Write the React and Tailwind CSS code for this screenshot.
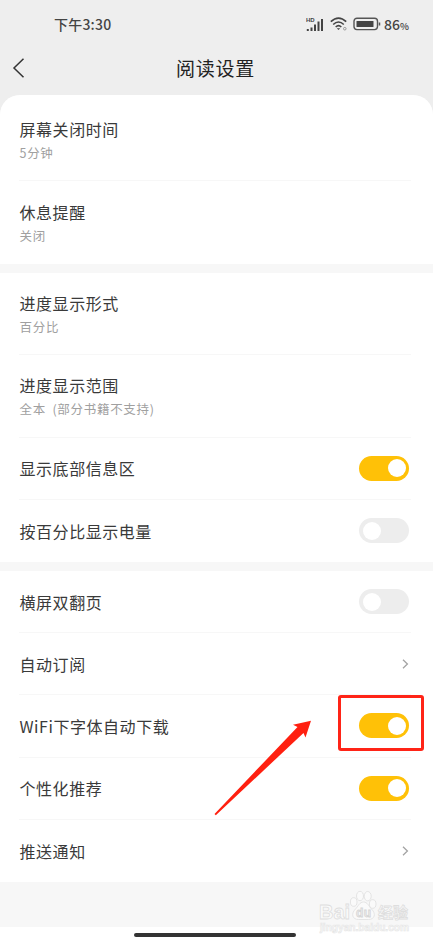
const sections = [
    [
        { title: "屏幕关闭时间", sub: "5分钟" },
        { title: "休息提醒", sub: "关闭" },
    ],
    [
        { title: "进度显示形式", sub: "百分比" },
        { title: "进度显示范围", sub: "全本 (部分书籍不支持)" },
        { title: "显示底部信息区", toggle: true, on: true },
        { title: "按百分比显示电量", toggle: true, on: false },
    ],
    [
        { title: "横屏双翻页", toggle: true, on: false },
        { title: "自动订阅", link: true },
        { title: "WiFi下字体自动下载", toggle: true, on: true, marked: true },
        { title: "个性化推荐", toggle: true, on: true },
        { title: "推送通知", link: true },
    ],
];

function Toggle({ on }) {
    return (
        <span className={`mr-[2px] flex h-[25px] w-[50px] items-center rounded-full px-[3.5px] ${on ? "justify-end bg-[#ffc107]" : "justify-start bg-[#ededed]"}`}>
            <span className="h-[18px] w-[18px] rounded-full bg-white" />
        </span>
    );
}

function Row({ item, last }) {
    return (
        <div className={`relative mr-[22px] ml-[19px] flex items-center justify-between ${item.sub ? "h-[82.4px] pt-[1px]" : "h-[62.2px]"} ${last ? "" : "border-b border-[#f7f7f7]"}`}>
            <div className="pl-[0.5px]">
                <div className="text-[16px] leading-[24px] tracking-[0.55px] text-[#3a3a3a]">{item.title}</div>
                {item.sub && <div className="mt-[2px] text-[12.5px] leading-[20px] tracking-[0.7px] whitespace-pre text-[#a0a0a0] [word-spacing:3px]">{item.sub}</div>}
            </div>
            {item.toggle && <Toggle on={item.on} />}
            {item.link && (
                <svg className="mr-[2px] h-[10px] w-[7px]" viewBox="0 0 7 10" fill="none" stroke="#a3a3a3" strokeWidth="1.3">
                    <path d="M1 .8 5.4 5 1 9.2" />
                </svg>
            )}
            {item.marked && <Marker />}
        </div>
    );
}

function Marker() {
    return (
        <>
            <div className="absolute top-0 -right-[13px] h-[56px] w-[86px] rounded-[3px] border-3 border-[#ff2417]" />
            <svg className="absolute top-[25px] left-[195px] h-[96px] w-[98px]" viewBox="0 0 98 96" fill="#ff2010">
                <path d="M97 .8 79 4.800l4.500 2.200L.5 94l1.300 1.300L89.500 13l2 4.500Z" />
            </svg>
        </>
    );
}

function StatusBar() {
    return (
        <div className="flex h-[45px] items-center justify-between pt-[3px] pr-[24px] pl-[54px] text-[#444]">
            <span className="text-[14px] font-medium tracking-[0.2px]">下午3:30</span>
            <div className="flex items-center">
                <svg className="h-[16px] w-[18px]" viewBox="0 -2 18 16" fill="#444">
                    <text x="0" y="4" fontSize="6" fontWeight="700" fontFamily="Liberation Sans">HD</text>
                    <path d="M.8 11h2v2h-2zM4.500 9.500h2V13h-2zM8 6.500h2V13H8zM11.500 3.500h2V13h-2zM15 1h2v12h-2z" />
                </svg>
                <svg className="ml-[6px] h-[14px] w-[18px]" viewBox="0 0 18 14" fill="none" stroke="#444" strokeWidth="1.600">
                    <path d="M.8 4.700q7.700-7.200 15.400 0M3.200 7.500q5.300-5 10.600 0M5.700 10q2.800-2.600 5.600 0" />
                    <path d="M6.800 11.200h3.400L8.500 13Z" fill="#444" stroke="none" />
                    <circle cx="14.800" cy="11.700" r="1.300" stroke="#888" strokeWidth=".8" />
                </svg>
                <svg className="ml-[5px] h-[14px] w-[28px]" viewBox="0 0 28 14" fill="none" stroke="#555">
                    <rect x="1" y="1.200" width="23.500" height="11.400" rx="3" strokeWidth="1.400" />
                    <rect x="3.500" y="4" width="17" height="6" rx=".5" fill="#444" stroke="none" />
                    <path d="M26.500 5.500v3" strokeWidth="1.500" />
                </svg>
                <span className="ml-[3px] text-[14px] font-medium">86<span className="text-[9.5px]">%</span></span>
            </div>
        </div>
    );
}

function Watermark() {
    return (
        <svg className="absolute top-[889px] left-[318px] h-[48px] w-[96px]" viewBox="0 0 96 48" fill="#fafafa" stroke="#dedede" strokeWidth=".8" fontFamily="Liberation Sans, Noto Sans CJK SC, sans-serif">
            <text x="1" y="30" fontSize="21" fontWeight="700" textLength="31" lengthAdjust="spacingAndGlyphs">Bai</text>
            <ellipse cx="35.700" cy="13" rx="3.300" ry="4.300" />
            <ellipse cx="42" cy="7" rx="3.500" ry="4.700" />
            <ellipse cx="49.700" cy="7.200" rx="3.500" ry="4.700" />
            <ellipse cx="54.700" cy="15" rx="3.300" ry="4.300" />
            <path d="M45.500 13c-4 0-5 4-8 7-5 5-3 10.500 3 10.500h10c6 0 8-5.500 3-10.500-3-3-4-7-8-7Z" />
            <text x="38" y="28" fontSize="12" fontWeight="700" textLength="15" fill="#eee" stroke="#d6d6d6">du</text>
            <text x="60" y="29" fontSize="15" fontWeight="700" textLength="30" fontFamily="Noto Sans CJK SC">经验</text>
            <text x="2" y="41.500" fontSize="10" fontWeight="700" textLength="89" lengthAdjust="spacingAndGlyphs" stroke="#e6e6e6" strokeWidth=".6">jingyan.baidu.com</text>
        </svg>
    );
}

export default function App() {
    return (
        <div className="h-[945px] w-full overflow-hidden bg-white">
            <div className="relative flex h-[941px] w-[433px] flex-col bg-[#eee] font-['Noto_Sans_CJK_SC',sans-serif]">
                <StatusBar />
                <header className="relative flex h-[50px] items-center justify-center pb-[3px]">
                    <svg className="absolute top-[12px] left-[12px] h-[22px] w-[14px]" viewBox="0 0 14 22" fill="none" stroke="#333" strokeWidth="1.500">
                        <path d="M11.500 1.800 2 11l9.500 9.200" />
                    </svg>
                    <h1 className="-ml-[2px] text-[19px] tracking-[0.7px] text-[#222]">阅读设置</h1>
                </header>
                <main className="flex flex-col gap-[9px] overflow-hidden rounded-t-[20px] bg-[#f7f7f7]">
                    {sections.map((rows, i) => (
                        <section key={i} className={`bg-white ${i === 0 ? "pt-[4px]" : ""}`}>
                            {rows.map((item, j) => (
                                <Row key={item.title} item={item} last={j === rows.length - 1} />
                            ))}
                        </section>
                    ))}
                </main>
                <div className="h-[45px] bg-[#f7f7f7]" />
                <footer className="flex flex-1 justify-center bg-white pt-[6px] pr-[3px]">
                    <div className="h-[4px] w-[162px] rounded-full bg-[#333]" />
                </footer>
                <Watermark />
            </div>
        </div>
    );
}
